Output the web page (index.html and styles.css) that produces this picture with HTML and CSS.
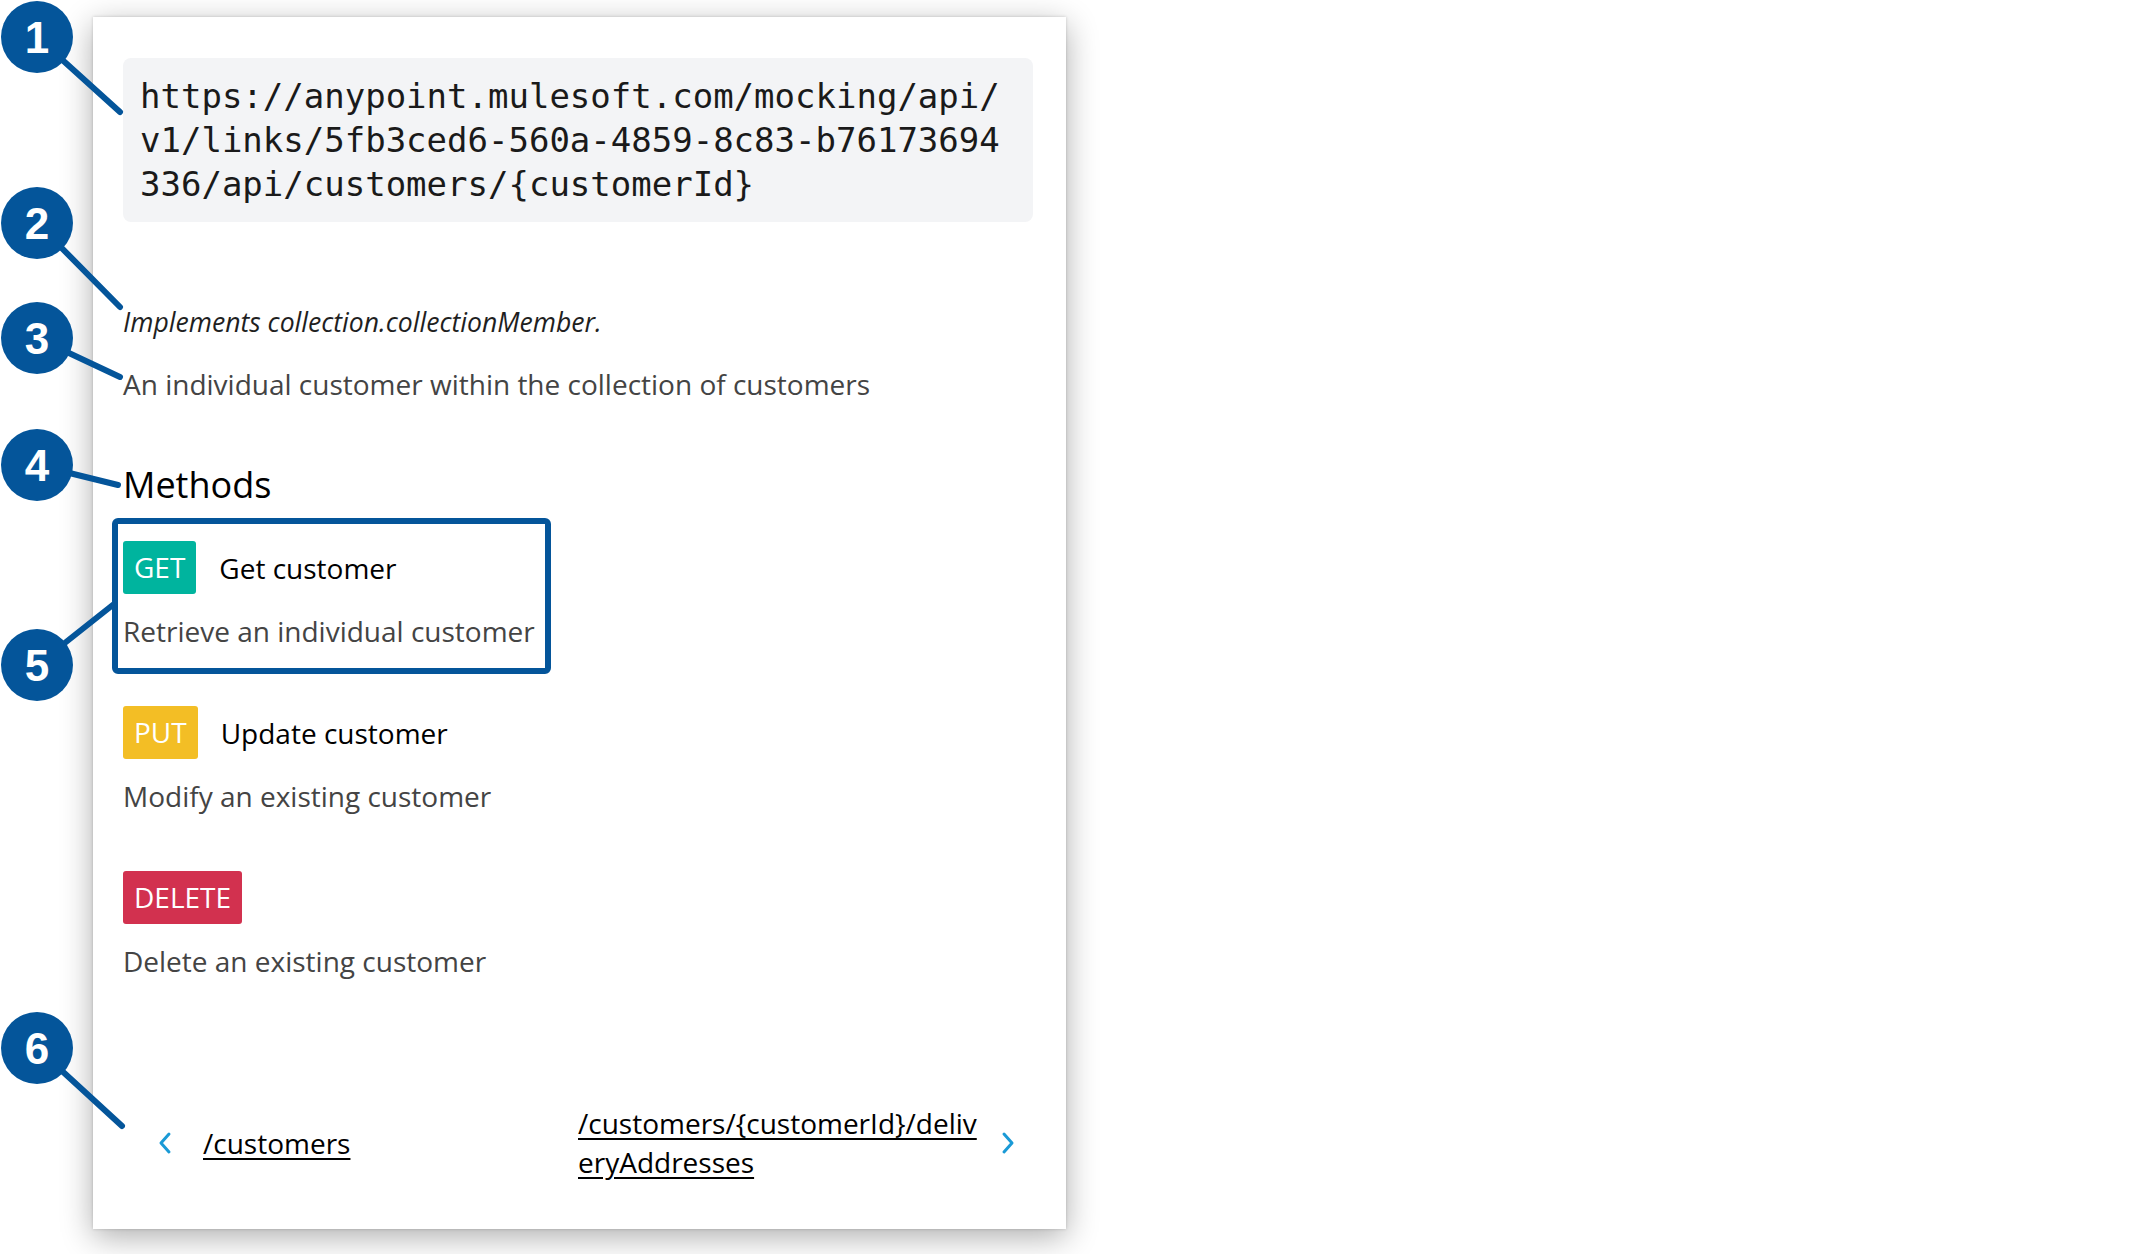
FILE: index.html
```html
<!DOCTYPE html>
<html lang="en">
<head>
<meta charset="utf-8">
<title>Resource</title>
<link rel="stylesheet" href="styles.css">
</head>
<body>
<div class="page">
  <main class="card">
    <pre class="endpoint">https://anypoint.mulesoft.com/mocking/api/v1/links/5fb3ced6-560a-4859-8c83-b76173694336/api/customers/{customerId}</pre>
    <p class="implements">Implements collection.collectionMember.</p>
    <p class="summary">An individual customer within the collection of customers</p>
    <h2 class="methods-title">Methods</h2>
    <ul class="methods">
      <li class="method">
        <div class="method-row"><span class="badge badge-get">GET</span><span class="method-name">Get customer</span></div>
        <p class="method-desc">Retrieve an individual customer</p>
      </li>
      <li class="method">
        <div class="method-row"><span class="badge badge-put">PUT</span><span class="method-name">Update customer</span></div>
        <p class="method-desc">Modify an existing customer</p>
      </li>
      <li class="method">
        <div class="method-row"><span class="badge badge-delete">DELETE</span></div>
        <p class="method-desc">Delete an existing customer</p>
      </li>
    </ul>
    <nav class="pager">
      <div class="pager-prev">
        <svg class="chev" viewBox="0 0 16 24" width="16" height="24"><polyline points="12,3 4,12 12,21" fill="none" stroke="#1a9ad6" stroke-width="3" stroke-linecap="round" stroke-linejoin="round"/></svg>
        <a class="pager-link" href="#">/customers</a>
      </div>
      <div class="pager-next">
        <a class="pager-link pager-link-wrap" href="#">/customers/{customerId}/deliveryAddresses</a>
        <svg class="chev" viewBox="0 0 16 24" width="16" height="24"><polyline points="4,3 12,12 4,21" fill="none" stroke="#1a9ad6" stroke-width="3" stroke-linecap="round" stroke-linejoin="round"/></svg>
      </div>
    </nav>
  </main>

  <svg class="annotations" width="2142" height="1254" viewBox="0 0 2142 1254">
    <g stroke="#04559a" stroke-width="6" stroke-linecap="round" fill="none">
      <line x1="37" y1="37" x2="120" y2="112"/>
      <line x1="37" y1="223" x2="120" y2="307"/>
      <line x1="37" y1="338" x2="120" y2="377"/>
      <line x1="37" y1="465" x2="118" y2="485"/>
      <line x1="37" y1="665" x2="114" y2="604"/>
      <line x1="37" y1="1048" x2="122" y2="1126"/>
      <rect x="115" y="521" width="433" height="150" rx="3"/>
    </g>
    <g fill="#04559a">
      <circle cx="37" cy="37" r="36"/>
      <circle cx="37" cy="223" r="36"/>
      <circle cx="37" cy="338" r="36"/>
      <circle cx="37" cy="465" r="36"/>
      <circle cx="37" cy="665" r="36"/>
      <circle cx="37" cy="1048" r="36"/>
    </g>
    <g class="callout-num" fill="#ffffff" text-anchor="middle">
      <text x="37" y="53">1</text>
      <text x="37" y="239">2</text>
      <text x="37" y="354">3</text>
      <text x="37" y="481">4</text>
      <text x="37" y="681">5</text>
      <text x="37" y="1064">6</text>
    </g>
  </svg>
</div>
</body>
</html>
```

FILE: styles.css
```css
html, body {
  margin: 0;
  padding: 0;
  background: #ffffff;
}

body {
  width: 2142px;
  height: 1254px;
  overflow: hidden;
  font-family: "Open Sans", "Noto Sans", sans-serif;
}

.page {
  position: relative;
  width: 2142px;
  height: 1254px;
  padding-top: 17px;
  box-sizing: border-box;
}

.card {
  margin-left: 93px;
  width: 973px;
  height: 1212px;
  box-sizing: border-box;
  padding: 41px 33px 0 30px;
  background: #ffffff;
  box-shadow: 0 0 3px rgba(0, 0, 0, 0.18), 0 8px 30px rgba(0, 0, 0, 0.32);
  display: flex;
  flex-direction: column;
}

.endpoint {
  margin: 0;
  padding: 16px 27px 16px 17px;
  background: #f3f4f6;
  border-radius: 8px;
  font-family: "DejaVu Sans Mono", "Liberation Mono", monospace;
  font-size: 34px;
  line-height: 44px;
  color: #1a1a1a;
  white-space: pre-wrap;
  word-break: break-all;
}

.implements {
  margin: 80px 0 0;
  font-style: italic;
  font-size: 26.6px;
  line-height: 40px;
  color: #1f1f1f;
}

.summary {
  margin: 22px 0 0;
  font-size: 28px;
  line-height: 40px;
  color: #444444;
}

.methods-title {
  margin: 57px 0 0;
  font-size: 36px;
  font-weight: 400;
  line-height: 48px;
  color: #000000;
}

.methods {
  list-style: none;
  margin: 32px 0 0;
  padding: 0;
  display: flex;
  flex-direction: column;
  gap: 55px;
}

.method-row {
  display: flex;
  align-items: center;
  gap: 23px;
  height: 53px;
}

.badge {
  display: inline-block;
  height: 53px;
  line-height: 53px;
  padding: 0 11px;
  border-radius: 3px;
  color: #ffffff;
  font-size: 28px;
}

.badge-get { background: #00b49e; }
.badge-put { background: #f3be25; }
.badge-delete { background: #d2314f; }

.method-name {
  font-size: 28px;
  color: #000000;
}

.method-desc {
  margin: 17px 0 0;
  font-size: 28px;
  line-height: 40px;
  color: #444444;
}

.pager {
  margin-top: 123px;
  display: flex;
  justify-content: space-between;
  align-items: center;
  padding: 0 17px 0 34px;
}

.pager-prev,
.pager-next {
  display: flex;
  align-items: center;
}

.pager-prev { gap: 30px; }
.pager-next { gap: 17px; }

.chev {
  display: block;
}

.pager-link {
  font-size: 28px;
  line-height: 39px;
  color: #000000;
  text-decoration: underline;
  text-underline-offset: 4px;
}

.pager-link-wrap {
  width: 405px;
  word-break: break-all;
}

.annotations {
  position: absolute;
  top: 0;
  left: 0;
  pointer-events: none;
}

.callout-num {
  font-family: "Liberation Sans", Arial, sans-serif;
  font-weight: 700;
  font-size: 44px;
}
```
